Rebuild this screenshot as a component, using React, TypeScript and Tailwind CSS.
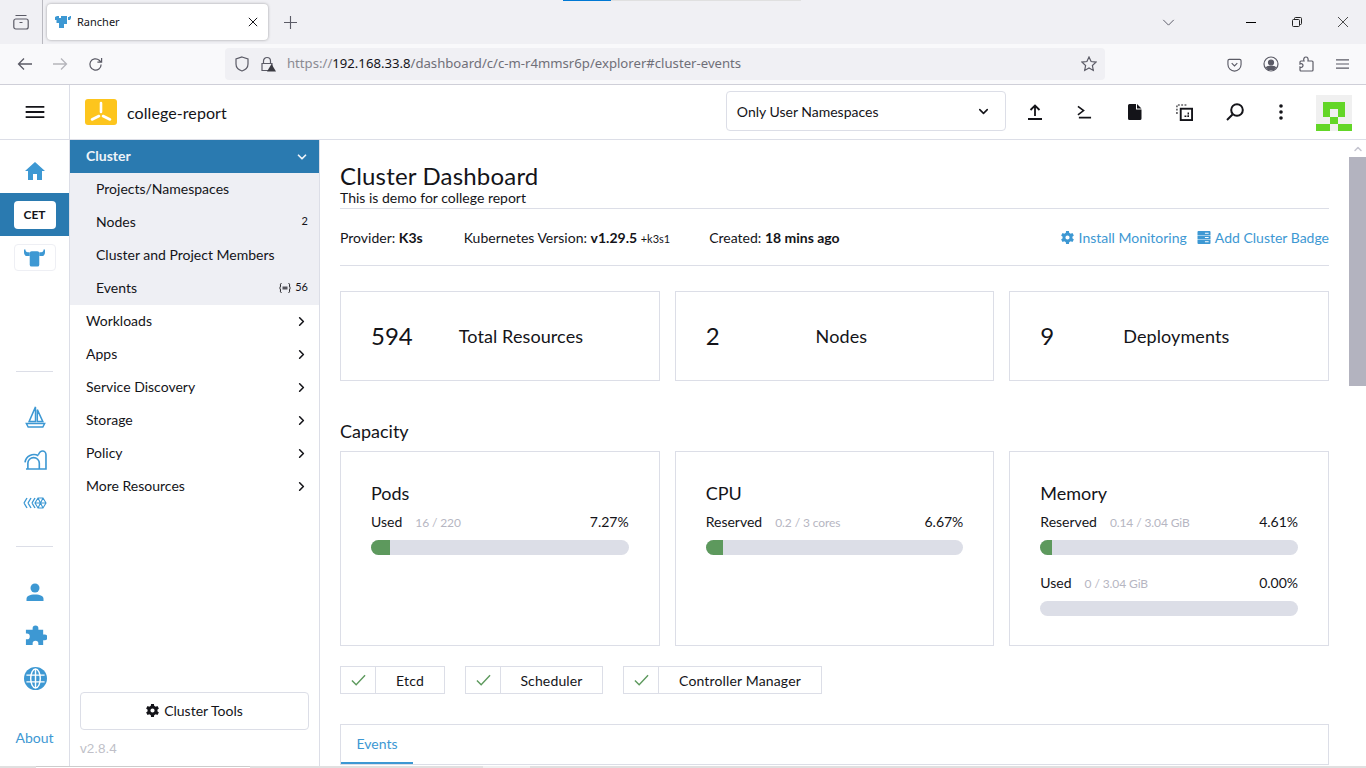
import { ChevronDown, ChevronRight, ChevronUp } from "lucide-react";

function Gear({ className }: { className: string }) {
  return (
    <svg viewBox="0 0 20 20" className={className} fill="currentColor" fillRule="evenodd">
      <path d="M17.500 11.300a7.600 7.600 0 0 0 0-2.600l2.300-1.700-2.200-3.800-2.700 1.100a7.500 7.500 0 0 0-2.200-1.300L12.200 0H7.800l-.5 3a7.500 7.500 0 0 0-2.200 1.300L2.400 3.200.2 7l2.300 1.700a7.600 7.600 0 0 0 0 2.600L.2 13l2.200 3.800 2.700-1.100a7.500 7.500 0 0 0 2.200 1.300l.5 3h4.400l.5-3a7.500 7.500 0 0 0 2.200-1.300l2.700 1.100 2.200-3.800zM10 13.200a3.200 3.200 0 1 1 0-6.400 3.200 3.200 0 0 1 0 6.400z" />
    </svg>
  );
}

function TabBar() {
  return (
    <div className="relative flex h-[44px] items-center bg-[#f0f0f4] text-[#5b5b66]">
      <div className="absolute left-[563px] top-0 flex h-px">
        <div className="w-[48px] bg-[#0078d4]" />
        <div className="w-[190px] bg-[#e0e0e0]" />
      </div>
      <div className="flex h-full w-[43px] items-center justify-center border-r border-[#b9b9c0]">
        <svg viewBox="0 0 16 16" className="h-4 w-4" fill="none" stroke="currentColor" strokeWidth="1.200">
          <rect x="0.800" y="5" width="14.400" height="10" rx="2" />
          <path d="M2.500 1.500h11M6.500 8.500h3" />
        </svg>
      </div>
      <div className="ml-[4px] flex h-[36px] w-[221px] items-center rounded-[4px] bg-white pl-[8px] pr-[10px] shadow-[0_0_3px_rgba(0,0,0,0.35)]">
        <svg viewBox="0 0 16 14" className="h-[14px] w-[16px]" fill="#3d98d3">
          <path d="M0 2l2-1h2v2h2V1h6v8H9v4H4V8H1.500V5H0zM13 5V2h1.500V1H16v2l-1 2z" />
        </svg>
        <span className="ml-[6px] font-['Noto_Sans',sans-serif] text-[11px] text-[#15141a]">Rancher</span>
        <svg viewBox="0 0 12 12" className="ml-auto h-[10px] w-[10px]" stroke="#15141a" strokeWidth="1.200">
          <path d="M1 1l10 10M11 1L1 11" />
        </svg>
      </div>
      <div className="ml-[15px] flex w-[14px] items-center justify-center">
        <svg viewBox="0 0 14 14" className="h-[13px] w-[13px]" stroke="#5b5b66" strokeWidth="1.200">
          <path d="M7 0v14M0 7h14" />
        </svg>
      </div>
      <div className="ml-auto flex items-center">
        <svg viewBox="0 0 14 8" className="h-[7px] w-[13px]" fill="none" stroke="#5b5b66" strokeWidth="1.100">
          <path d="M1 1l6 6 6-6" />
        </svg>
        <div className="ml-[71px] h-[1px] w-[10px] bg-black" />
        <svg viewBox="0 0 10 10" className="ml-[36px] h-[10px] w-[10px]" fill="none" stroke="#222" strokeWidth="1">
          <rect x="0.500" y="2.500" width="7" height="7" rx="1" />
          <path d="M2.500 2.500V1.500a1 1 0 0 1 1-1h5a1 1 0 0 1 1 1v5a1 1 0 0 1-1 1h-1" />
        </svg>
        <svg viewBox="0 0 10 10" className="ml-[36px] mr-[18px] h-[10px] w-[10px]" stroke="#222" strokeWidth="0.800">
          <path d="M0 0l10 10M10 0L0 10" />
        </svg>
      </div>
    </div>
  );
}

function NavBar() {
  return (
    <div className="flex h-[41px] items-center border-b border-[#cfcfd8] bg-[#f9f9fb]">
      <svg viewBox="0 0 16 14" className="ml-[17px] h-[14px] w-[16px]" fill="none" stroke="#5b5b66" strokeWidth="1.300">
        <path d="M15 7H1.500M7 1.500L1.500 7 7 12.500" />
      </svg>
      <svg viewBox="0 0 16 14" className="ml-[19px] h-[14px] w-[16px]" fill="none" stroke="#b5b5bb" strokeWidth="1.300">
        <path d="M1 7h13.500M9 1.500L14.500 7 9 12.500" />
      </svg>
      <svg viewBox="0 0 16 16" className="ml-[20px] h-[15px] w-[15px]" fill="none" stroke="#5b5b66" strokeWidth="1.300">
        <path d="M14 8a6 6 0 1 1-2-4.500L14 5.500M14.500 1v4.500H10" />
      </svg>
      <div className="ml-[122px] flex h-[32px] w-[880px] items-center rounded-[4px] bg-[#f0f0f4] pl-[9px] pr-[8px]">
        <svg viewBox="0 0 16 16" className="h-[16px] w-[16px]" fill="none" stroke="#5b5b66" strokeWidth="1.200">
          <path d="M8 1l6 2v5c0 3.500-3 6-6 7-3-1-6-3.500-6-7V3z" />
        </svg>
        <svg viewBox="0 0 16 16" className="ml-[10px] h-[16px] w-[16px]">
          <path d="M3.500 7V5a3.500 3.500 0 0 1 7 0v2M2 7.500h10v7H2z" fill="none" stroke="#5b5b66" strokeWidth="1.200" />
          <path d="M11.500 8l4.500 7.500H7z" fill="#3b3b42" />
        </svg>
        <span className="ml-[11px] font-['Noto_Sans',sans-serif] text-[13.150px] leading-none">
          <span className="text-[#8a8a92]">https://</span>
          <span className="text-[#15141a]">192.168.33.8</span>
          <span className="text-[#6f6f78]">/dashboard/c/c-m-r4mmsr6p/explorer#cluster-events</span>
        </span>
        <svg viewBox="0 0 16 16" className="ml-auto h-[16px] w-[16px]" fill="none" stroke="#5b5b66" strokeWidth="1.200">
          <path d="M8 1l2.100 4.500 4.900.6-3.600 3.400.9 4.900L8 12l-4.300 2.400.9-4.900L1 6.100l4.900-.6z" />
        </svg>
      </div>
      <svg viewBox="0 0 16 16" className="ml-[122px] h-[15px] w-[15px]" fill="none" stroke="#5b5b66" strokeWidth="1.200">
        <path d="M2.500 2.500h11a1.500 1.500 0 0 1 1.500 1.500v4a7 7 0 0 1-14 0V4a1.500 1.500 0 0 1 1.500-1.500zM5 6.500l3 3 3-3" />
      </svg>
      <svg viewBox="0 0 16 16" className="ml-[21px] h-[16px] w-[16px]" fill="none" stroke="#5b5b66" strokeWidth="1.200">
        <circle cx="8" cy="8" r="7" />
        <circle cx="8" cy="6.500" r="2.500" fill="#5b5b66" />
        <path d="M3.500 11.500c1-1.500 8-1.500 9 0L11 13.500H5z" fill="#5b5b66" />
      </svg>
      <svg viewBox="0 0 16 16" className="ml-[20px] h-[16px] w-[16px]" fill="none" stroke="#5b5b66" strokeWidth="1.200">
        <path d="M6 15H2a1 1 0 0 1-1-1v-3c2 1 3-.5 3-1.500S3 7 1 8V6a1 1 0 0 1 1-1h3C4 2.500 5.500 1 7 1s2.500 1.500 2 4h4a1 1 0 0 1 1 1v8a1 1 0 0 1-1 1z" />
      </svg>
      <svg viewBox="0 0 14 12" className="ml-[21px] h-[12px] w-[13px]" stroke="#5b5b66" strokeWidth="1.200">
        <path d="M0 1.500h14M0 6h14M0 10.500h14" />
      </svg>
    </div>
  );
}

function AppHeader() {
  const btn = "flex w-[50px] items-center justify-center text-[#141419]";
  return (
    <div className="flex h-[55px] items-center border-b border-[#dcdee7] bg-white">
      <div className="flex h-full w-[70px] shrink-0 items-center justify-center border-r border-[#dcdee7] pl-px">
        <svg viewBox="0 0 20 15" className="h-[14px] w-[20px]" stroke="#141419" strokeWidth="2">
          <path d="M0 2h20M0 7.500h20M0 13h20" />
        </svg>
      </div>
      <div className="ml-[15px] flex h-[26px] w-[32px] items-center justify-center rounded-[3px] bg-[#fdc51d]">
        <svg viewBox="0 0 32 26" className="h-[26px] w-[32px]" stroke="#fff" strokeWidth="2.600" strokeLinecap="round">
          <path d="M16 4v9M14 17l-7 3.500M18 17l7 3.500" />
        </svg>
      </div>
      <span className="ml-[10px] pt-px text-[16px] tracking-[0.08px] text-[#141419]">college-report</span>
      <div className="mb-[2px] ml-[499px] flex h-[40px] w-[280px] items-center rounded-[4px] border border-[#dcdee7] pl-[10px] pr-[14px] text-[14px] text-[#141419]">
        Only User Namespaces
        <ChevronDown className="ml-auto h-[15px] w-[15px]" strokeWidth={2.500} />
      </div>
      <div className="ml-[4px] flex items-center">
        <div className={btn}>
          <svg viewBox="0 0 16 16" className="h-[16px] w-[16px]" fill="none" stroke="currentColor" strokeWidth="1.800">
            <path d="M8 12V2M3.500 6L8 1.500 12.500 6M1 15h14" />
          </svg>
        </div>
        <div className={btn}>
          <svg viewBox="0 0 16 14" className="h-[14px] w-[15px]" fill="none" stroke="currentColor" strokeWidth="1.700">
            <path d="M1 1l6 4.500L1 10M2 13h13" />
          </svg>
        </div>
        <div className={btn}>
          <svg viewBox="0 0 14 16" className="h-[16px] w-[14px]" fill="currentColor">
            <path d="M1.500 0H8v5.500h5.500v9a1.500 1.500 0 0 1-1.500 1.500H1.500A1.500 1.500 0 0 1 0 14.500v-13A1.500 1.500 0 0 1 1.500 0zM9 0l4.500 4.500H9z" />
          </svg>
        </div>
        <div className={btn}>
          <svg viewBox="0 0 18 18" className="h-[17px] w-[17px]" fill="none" stroke="currentColor">
            <path d="M11 1H1v10" strokeDasharray="2 1.500" strokeWidth="1.200" />
            <rect x="5" y="5" width="12" height="12" strokeWidth="2" />
            <path d="M13 9v4H9" strokeDasharray="2 1" strokeWidth="1.500" />
          </svg>
        </div>
        <div className={btn}>
          <svg viewBox="0 0 18 18" className="h-[18px] w-[18px]" fill="none" stroke="currentColor" strokeWidth="2">
            <circle cx="11" cy="7" r="5.800" />
            <path d="M6.500 11.500L1 17" />
          </svg>
        </div>
        <div className="flex w-[42px] items-center justify-center text-[#141419]">
          <svg viewBox="0 0 4 16" className="h-[16px] w-[4px]" fill="currentColor">
            <circle cx="2" cy="2" r="1.800" />
            <circle cx="2" cy="8" r="1.800" />
            <circle cx="2" cy="14" r="1.800" />
          </svg>
        </div>
      </div>
      <svg viewBox="0 0 5 5" className="ml-[14px] mt-[2px] h-[36px] w-[36px]" shapeRendering="crispEdges">
        <rect width="5" height="5" fill="#f0f0f0" />
        <path d="M1 1h3v2H3V2H2v1H1zM2 3h1v1H2zM0 4h2v1H0zM3 4h2v1H3z" fill="#63d627" />
      </svg>
    </div>
  );
}

function Rail() {
  const icon = "flex h-[33px] w-full items-center justify-center pl-px text-[#3d98d3]";
  return (
    <div className="flex w-[70px] shrink-0 flex-col border-r border-[#dcdee7] bg-white">
      <div className="flex h-[53px] items-center justify-center pl-px pt-[8px] text-[#3d98d3]">
        <svg viewBox="0 0 20 18" className="h-[18px] w-[20px]" fill="currentColor">
          <path d="M10 0l10 9h-3v9h-5v-6H8v6H3V9H0z" />
        </svg>
      </div>
      <div className="flex h-[43px] items-center justify-center bg-[#2a7ab0]">
        <div className="flex h-[28px] w-[42px] items-center justify-center rounded-[4px] bg-white text-[12px] font-bold text-[#141419]">
          CET
        </div>
      </div>
      <div className="mt-[8px] flex h-[27px] w-[42px] items-center justify-center self-center rounded-[4px] border border-[#eeeff4]">
        <svg viewBox="0 0 22 18" className="h-[18px] w-[21px]" fill="#3d98d3">
          <path d="M0 0h1.500c0 2 1 3 4.500 3v4H3C1 7 0 5 0 3zM22 0h-1.500c0 2-1 3-4.500 3v4h3c2 0 3-2 3-4z" />
          <rect x="6" y="2" width="10" height="16" rx="2" />
        </svg>
      </div>
      <div className="mx-[16px] mt-[100px] h-px bg-[#dcdee7]" />
      <div className="mt-[28px] flex flex-col gap-[10px]">
        <div className={icon}>
          <svg viewBox="0 0 22 24" className="h-[22px] w-[21px]" fill="none" stroke="currentColor" strokeWidth="1.600">
            <path d="M11 1L4 17h7zM13 4l6 13h-6zM1 19h20l-2 4H3z" />
          </svg>
        </div>
        <div className={icon}>
          <svg viewBox="0 0 24 21" className="h-[20px] w-[23px]" fill="none" stroke="currentColor" strokeWidth="1.700">
            <path d="M1 13a9.500 9.500 0 0 1 14-7M4 20v-6a6 6 0 0 1 12 0v6M15 5c1-2.500 2.800-4 4.500-4s3.500 1.500 3.500 4v15H2" />
          </svg>
        </div>
        <div className={icon}>
          <svg viewBox="0 0 24 12" className="h-[12px] w-[24px]" fill="none" stroke="currentColor" strokeWidth="1.400">
            <path d="M1 6l3-5M1 6l3 5M5 6l3-5M5 6l3 5M9 6l3-5M9 6l3 5" />
            <path d="M15 1h5l3 5-3 5h-5l-3-5zM15 1l5 10M20 1l-5 10M12 6h11" strokeWidth="1.100" />
          </svg>
        </div>
      </div>
      <div className="mx-[16px] mt-[27px] h-px bg-[#dcdee7]" />
      <div className="mt-[28px] flex flex-col gap-[10.500px]">
        <div className={icon}>
          <svg viewBox="0 0 18 18" className="h-[18px] w-[18px]" fill="currentColor">
            <circle cx="9" cy="5" r="4.500" />
            <path d="M0.500 18v-2c0-3 3-4.500 8.500-4.500s8.500 1.500 8.500 4.500v2z" />
          </svg>
        </div>
        <div className={icon}>
          <svg viewBox="0 0 24 24" className="h-[23px] w-[23px]" fill="currentColor">
            <path d="M9 4.500a3 3 0 0 1 6 0V6h5v5h1.500a3 3 0 0 1 0 6H20v5h-5v-1.500a3 3 0 0 0-6 0V22H2v-6h1a3 3 0 0 0 0-6H2V6h7z" />
          </svg>
        </div>
        <div className={icon}>
          <svg viewBox="0 0 24 24" className="h-[23px] w-[23px]">
            <circle cx="12" cy="12" r="12" fill="currentColor" />
            <g fill="none" stroke="#fff" strokeWidth="1.500">
              <ellipse cx="12" cy="12" rx="5" ry="10" />
              <path d="M12 2v20M2.500 8.500h19M2.500 15.500h19" />
            </g>
          </svg>
        </div>
      </div>
      <div className="mt-auto pb-[18px] text-center text-[14px] text-[#3d98d3]">About</div>
    </div>
  );
}

function SubItem({ label, right }: { label: string; right?: React.ReactNode }) {
  return (
    <div className="flex h-[33px] items-center pb-[2px] pl-[26px] pr-[11px] text-[14px] text-[#141419]">
      {label}
      <span className="ml-auto flex items-center gap-[4px] text-[11px]">{right}</span>
    </div>
  );
}

function Sidebar() {
  const groups = ["Workloads", "Apps", "Service Discovery", "Storage", "Policy", "More Resources"];
  return (
    <div className="flex w-[250px] shrink-0 flex-col border-r border-[#dcdee7] bg-white">
      <div className="flex h-[33px] items-center bg-[#2a7ab0] pb-[2px] pl-[16px] pr-[10px] text-[14px] font-bold text-[#eef3f8]">
        Cluster
        <ChevronDown className="ml-auto mt-[2px] h-[14px] w-[14px]" strokeWidth={3} />
      </div>
      <div className="bg-[#eeeff4]">
        <SubItem label="Projects/Namespaces" />
        <SubItem label="Nodes" right="2" />
        <SubItem label="Cluster and Project Members" />
        <SubItem
          label="Events"
          right={
            <>
              <svg viewBox="0 0 12 10" className="h-[10px] w-[12px]" fill="none" stroke="#141419" strokeWidth="0.900">
                <path d="M2.500 0.500c-1.500 0-1 1-1 2.500 0 1-.4 1.500-1 2 .6.500 1 1 1 2 0 1.500-.5 2.500 1 2.500M9.500 0.500c1.500 0 1 1 1 2.500 0 1 .4 1.500 1 2-.6.500-1 1-1 2 0 1.500.5 2.500-1 2.500" />
                <rect x="3.500" y="3.500" width="5" height="3" fill="#55555c" stroke="none" />
              </svg>
              56
            </>
          }
        />
      </div>
      {groups.map((g) => (
        <div key={g} className="flex h-[33px] items-center pb-[2px] pl-[16px] pr-[10px] text-[14px] text-[#141419]">
          {g}
          <ChevronRight className="ml-auto mt-[2px] h-[15px] w-[15px]" strokeWidth={2.500} />
        </div>
      ))}
      <div className="mx-[10px] mt-auto flex h-[38px] items-center justify-center gap-[5px] rounded-[4px] border border-[#dcdee7] text-[14px] text-[#141419]">
        <Gear className="h-[13px] w-[13px]" />
        Cluster Tools
      </div>
      <div className="mb-[7px] ml-[10px] mt-[9px] font-['Liberation_Sans',sans-serif] text-[13.500px] text-[#c0bfc8]">v2.8.4</div>
    </div>
  );
}

function StatCard({ n, label, gap }: { n: string; label: string; gap: string }) {
  return (
    <div className="flex h-[90px] flex-1 items-center border border-[#dcdee7] pl-[30px]">
      <span className="text-[24px] text-[#141419]">{n}</span>
      <span className={`text-[18px] tracking-[0.1px] text-[#141419] ${gap}`}>{label}</span>
    </div>
  );
}

function Meter({ label, detail, pct, width }: { label: string; detail: string; pct: string; width: string }) {
  return (
    <div>
      <div className="flex items-baseline text-[14px] leading-[20px] text-[#141419]">
        {label}
        <span className="ml-[13px] text-[12px] tracking-[-0.1px] text-[#b6b6c2]">{detail}</span>
        <span className="ml-auto">{pct}</span>
      </div>
      <div className="mt-[7px] h-[15px] overflow-hidden rounded-[8px] bg-[#dcdee7]">
        <div className={`h-full bg-[#5d995d] ${width}`} />
      </div>
    </div>
  );
}

function GaugeCard({ title, children }: { title: string; children: React.ReactNode }) {
  return (
    <div className="flex h-[195px] flex-1 flex-col border border-[#dcdee7] px-[30px] pt-[29px]">
      <h3 className="mb-[7px] text-[18px] leading-[24px] text-[#141419]">{title}</h3>
      {children}
    </div>
  );
}

function Chip({ label, width }: { label: string; width: string }) {
  return (
    <div className={`flex h-[28px] items-center border border-[#dcdee7] ${width}`}>
      <div className="flex h-full w-[35px] shrink-0 items-center justify-center border-r border-[#dcdee7]">
        <svg viewBox="0 0 16 12" className="h-[12px] w-[15px]" fill="none" stroke="#5d995d" strokeWidth="1.500">
          <path d="M1 6.500L5.500 11 15 1" />
        </svg>
      </div>
      <span className="flex-1 text-center text-[14px] tracking-[0.15px] text-[#141419]">{label}</span>
    </div>
  );
}

function Main() {
  return (
    <div className="relative min-w-0 flex-1 overflow-hidden bg-white">
      <div className="w-[1029px] px-[20px] pt-[21px]">
        <h1 className="text-[24px] leading-[30px] tracking-[0.18px] text-[#141419]">Cluster Dashboard</h1>
        <p className="-mt-px text-[14px] leading-[16px] text-[#141419]">This is demo for college report</p>
        <div className="mt-[2px] flex h-[58px] items-center border-y border-[#dcdee7] text-[14px] text-[#141419]">
          <span>
            Provider: <b>K3s</b>
          </span>
          <span className="ml-[41px]">
            Kubernetes Version: <b>v1.29.5</b> <span className="text-[11px]">+k3s1</span>
          </span>
          <span className="ml-[39px]">
            Created: <b>18 mins ago</b>
          </span>
          <span className="ml-auto flex items-center text-[#3d98d3]">
            <Gear className="mr-[5px] h-[13px] w-[13px]" />
            Install Monitoring
            <svg viewBox="0 0 14 14" className="ml-[10px] mr-[4px] h-[13px] w-[14px]" fill="currentColor">
              <path d="M0 1a1 1 0 0 1 1-1h12a1 1 0 0 1 1 1v3.500H0zM0 5h14v4H0zM0 9.500h14V13a1 1 0 0 1-1 1H1a1 1 0 0 1-1-1zM8 2v1h4V2zM8 6.500v1h4v-1zM8 11v1h4v-1z" fillRule="evenodd" />
            </svg>
            Add Cluster Badge
          </span>
        </div>
        <div className="mt-[25px] flex gap-[15px]">
          <StatCard n="594" label="Total Resources" gap="ml-[46px]" />
          <StatCard n="2" label="Nodes" gap="ml-[96px]" />
          <StatCard n="9" label="Deployments" gap="ml-[69px]" />
        </div>
        <h2 className="mb-[8px] mt-[38px] text-[18px] leading-[24px] text-[#141419]">Capacity</h2>
        <div className="flex gap-[15px]">
          <GaugeCard title="Pods">
            <Meter label="Used" detail="16 / 220" pct="7.27%" width="w-[7.270%]" />
          </GaugeCard>
          <GaugeCard title="CPU">
            <Meter label="Reserved" detail="0.2 / 3 cores" pct="6.67%" width="w-[6.670%]" />
          </GaugeCard>
          <GaugeCard title="Memory">
            <Meter label="Reserved" detail="0.14 / 3.04 GiB" pct="4.61%" width="w-[4.610%]" />
            <div className="mt-[18px]">
              <Meter label="Used" detail="0 / 3.04 GiB" pct="0.00%" width="w-0" />
            </div>
          </GaugeCard>
        </div>
        <div className="mt-[20px] flex">
          <Chip label="Etcd" width="w-[105px]" />
          <div className="ml-[20px]">
            <Chip label="Scheduler" width="w-[138px]" />
          </div>
          <div className="ml-[20px]">
            <Chip label="Controller Manager" width="w-[199px]" />
          </div>
        </div>
        <div className="mt-[30px] h-[41px] border border-[#dcdee7]">
          <div className="flex h-[39px] w-[72px] items-center justify-center border-b-2 border-[#3d98d3] text-[14px] text-[#3d98d3]">
            Events
          </div>
        </div>
      </div>
      <div className="absolute right-0 top-0 flex h-full w-[17px] flex-col bg-white">
        <div className="flex h-[17px] items-center justify-center">
          <ChevronUp className="h-[12px] w-[12px] text-[#c5c5d0]" strokeWidth={3} />
        </div>
        <div className="h-[229px] bg-[#b3b3bf]" />
      </div>
    </div>
  );
}

export default function App() {
  return (
    <div className="flex h-[768px] w-[1366px] flex-col overflow-hidden bg-white font-['Lato',sans-serif]">
      <TabBar />
      <NavBar />
      <AppHeader />
      <div className="flex min-h-0 flex-1">
        <Rail />
        <Sidebar />
        <Main />
      </div>
      <div className="flex h-[2px] shrink-0 bg-[#e0e0e0]">
        <div className="w-[36px]" />
        <div className="w-[214px] border-t border-[#cccccc] bg-white" />
        <div className="ml-[233px] w-[47px] bg-[#f0f0f0]" />
      </div>
    </div>
  );
}
